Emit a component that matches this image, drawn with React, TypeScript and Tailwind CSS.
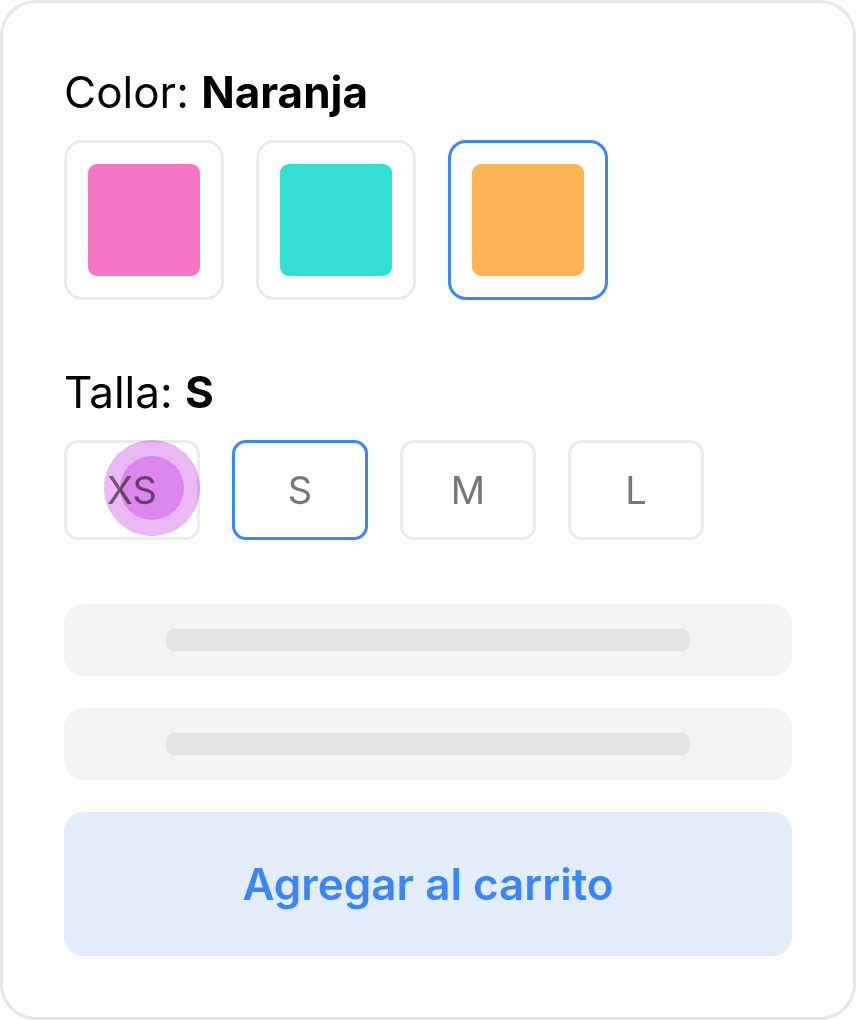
const colors = [
  { name: "Rosa", swatch: "bg-[#f774c4]" },
  { name: "Turquesa", swatch: "bg-[#33dfd3]" },
  { name: "Naranja", swatch: "bg-[#ffb353]" },
];

const sizes = ["XS", "S", "M", "L"];

export default function App() {
  const selectedColor = "Naranja";
  const selectedSize = "S";

  return (
    <div className="w-[856px] h-[1020px] bg-white font-['Inter',sans-serif]">
      <div className="h-full rounded-[36px] border-[3px] border-[#e6e6e6] bg-white px-[61px] pt-[61px] pb-[61px] flex flex-col">
        <p className="text-[44px] leading-[56px] text-black">
          Color: <span className="font-bold">{selectedColor}</span>
        </p>
        <div className="mt-[20px] flex gap-[32px]">
          {colors.map((c) => (
            <button
              key={c.name}
              className={`w-[160px] h-[160px] rounded-[18px] border-[3px] flex items-center justify-center ${
                c.name === selectedColor ? "border-[#3b86f7]" : "border-[#ececec]"
              }`}
            >
              <span className={`w-[112px] h-[112px] rounded-[9px] ${c.swatch}`} />
            </button>
          ))}
        </div>

        <p className="mt-[64px] text-[44px] leading-[56px] text-black">
          Talla: <span className="font-bold">{selectedSize}</span>
        </p>
        <div className="mt-[20px] flex gap-[32px]">
          {sizes.map((s) => (
            <button
              key={s}
              className={`relative w-[136px] h-[100px] rounded-[14px] border-[3px] flex items-center justify-center text-[38px] text-[#777777] ${
                s === selectedSize ? "border-[#3b86f7]" : "border-[#ececec]"
              }`}
            >
              {s}
              {s === "XS" && (
                <span className="absolute left-[37px] top-[-3px] w-[96px] h-[96px] rounded-full bg-[#eab8f5] mix-blend-multiply flex items-center justify-center">
                  <span className="w-[64px] h-[64px] rounded-full bg-[#dc86ee]" />
                </span>
              )}
            </button>
          ))}
        </div>

        <div className="mt-[64px] h-[72px] rounded-[20px] bg-[#f4f4f4] flex items-center justify-center">
          <div className="w-[524px] h-[22px] rounded-[8px] bg-[#e4e4e4]" />
        </div>
        <div className="mt-[32px] h-[72px] rounded-[20px] bg-[#f4f4f4] flex items-center justify-center">
          <div className="w-[524px] h-[22px] rounded-[8px] bg-[#e4e4e4]" />
        </div>

        <button className="mt-[32px] h-[144px] rounded-[20px] bg-[#e2ecfb] text-[44px] font-semibold text-[#3b86f7]">
          Agregar al carrito
        </button>
      </div>
    </div>
  );
}
